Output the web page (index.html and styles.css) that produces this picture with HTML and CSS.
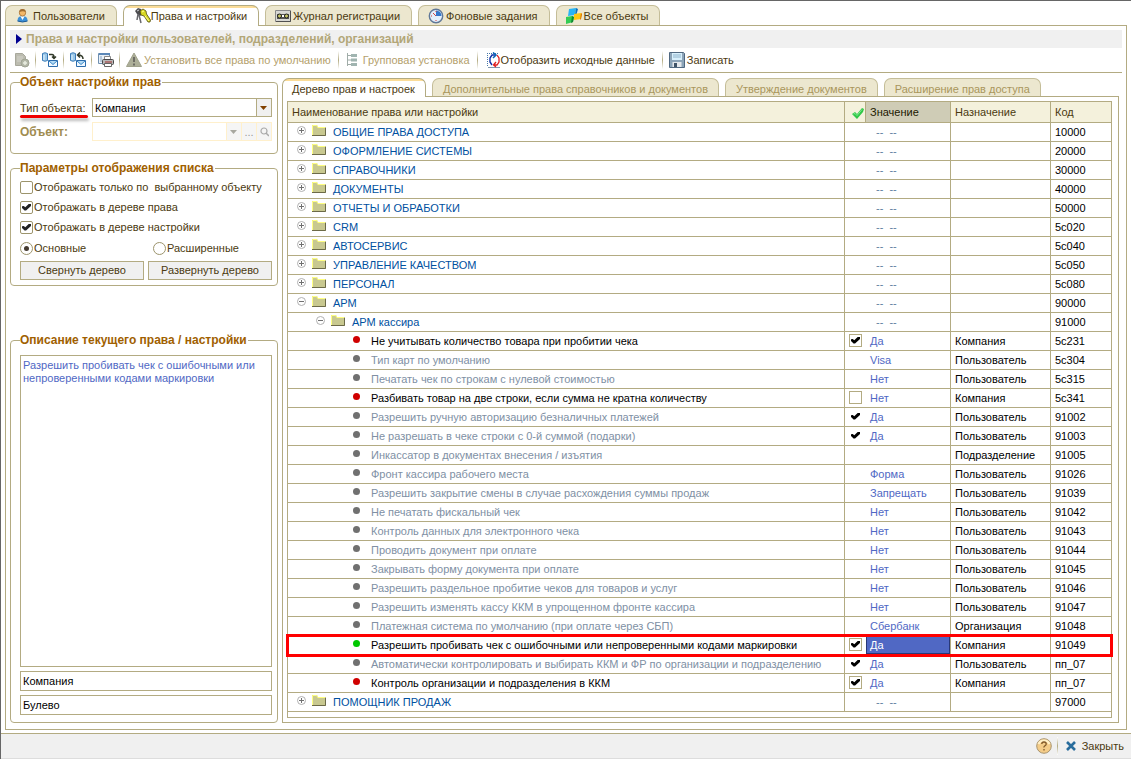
FILE: index.html
```html
<!DOCTYPE html>
<html lang="ru">
<head>
<meta charset="utf-8">
<title>Права и настройки</title>
<link rel="stylesheet" href="styles.css">
</head>
<body>
<svg class="defs" width="0" height="0">
  <symbol id="folder" viewBox="0 0 14 11"><path d="M0 0h5l1 2h8v9H0z" fill="#c8c890"/><path d="M.5 10V.5h4.3l1 2H13" fill="none" stroke="#ffff80"/><path d="M0 10.500h13.500V3" fill="none" stroke="#6c6a48"/></symbol>
  <symbol id="plus" viewBox="0 0 9 9"><circle cx="4.500" cy="4.500" r="4" fill="#fff" stroke="#b0b0b0"/><path d="M2 4.500h5M4.500 2v5" stroke="#707070"/></symbol>
  <symbol id="minus" viewBox="0 0 9 9"><circle cx="4.500" cy="4.500" r="4" fill="#fff" stroke="#b0b0b0"/><path d="M2 4.500h5" stroke="#707070"/></symbol>
  <symbol id="swap" viewBox="0 0 16 16"><path d="M.5 1.500v7q2.500 1.500 5 0v-7q-2.500-1.500-5 0z" fill="#9cc8e8" stroke="#3c7cb8"/><path d="M2 3v5" stroke="#e8f6ff"/><path d="M6.500 8.500h9v6h-9z" fill="#f0f8ff" stroke="#2c6cac"/><path d="M7 9l4 3.500L15 9" fill="#b4daf4" stroke="#3c88c8"/></symbol>
</svg>
<nav class="tabs top-tabs" role="tablist">
  <button class="tab" role="tab" type="button"><svg width="16" height="16" viewBox="0 0 16 16"><path d="M2.500 13q0-4.500 3-4.500h4q3 0 3 4.500-5 2-10 0z" fill="#3c90d8"/><path d="M5.500 8.500l2 3.500 2-3.500z" fill="#fff"/><path d="M2.500 13q5 2 10 0" fill="none" stroke="#1c5890"/><circle cx="7.500" cy="4.800" r="3.200" fill="#f4b868" stroke="#9c6428" stroke-width=".7"/><path d="M4.300 4q0-3 3.200-3t3.200 3Q8 2.500 4.300 4z" fill="#a06c30"/></svg><span>Пользователи</span></button>
  <button class="tab active" role="tab" aria-selected="true" type="button"><svg width="16" height="16" viewBox="0 0 16 16"><path d="M0 3l3-3 3 1 2 5-3 2-3-2z" fill="#4c4c50"/><path d="M4 7l2 8M3 6l-1 6" stroke="#68686c" stroke-width="1.500"/><path d="M2 3l2-1" stroke="#d0d0d0"/><path d="M5 3l3-2 3 2 .5 3 4 6-.5 2h-2L9 8 6 7z" fill="#d8d820" stroke="#504c10" stroke-width=".8"/><path d="M7 4l2-1M10 8l4 5" stroke="#ffff90"/></svg><span>Права и настройки</span></button>
  <button class="tab" role="tab" type="button"><svg width="16" height="16" viewBox="0 0 16 16"><path d="M.5 2.500h15v11H.5z" fill="#d8d8d4" stroke="#888"/><path d="M1 13.500h14.500V3" fill="none" stroke="#505050"/><path d="M2 6h12v5H2z" fill="#555"/><circle cx="4.500" cy="8" r="2" fill="#c8c868" stroke="#222"/><circle cx="11.500" cy="8" r="2" fill="#c8c868" stroke="#222"/><path d="M7 8h2" stroke="#fff" stroke-width="2"/></svg><span>Журнал регистрации</span></button>
  <button class="tab" role="tab" type="button"><svg width="16" height="16" viewBox="0 0 16 16"><circle cx="8" cy="8" r="6.700" fill="#e4f0fc" stroke="#607898" stroke-width="1.400"/><path d="M8 8V2.500A5.500 5.500 0 0 1 13.500 8z" fill="#3478cc"/><path d="M8 8l-3-3M8 3v1M3 8h1M8 12v1" stroke="#d04040"/></svg><span>Фоновые задания</span></button>
  <button class="tab" role="tab" type="button"><svg width="16" height="16" viewBox="0 0 16 16"><path d="M3 1l7-1-1 7-7 1z" fill="#28b4f4"/><path d="M10 0l2 1-2 7-1-1z" fill="#0870c0"/><path d="M8 6l7-1 1 1-1 5-7 1z" fill="#ffc810"/><path d="M15 5l1 1-1 5-1 1z" fill="#d87008"/><path d="M0 9l6-1 2 1-1 5-7 2z" fill="#34cc54"/><path d="M6 8l2 1-1 5-2 1z" fill="#108830"/></svg><span>Все объекты</span></button>
</nav>
<main class="frame">
  <h1 class="title"><svg width="6" height="10" viewBox="0 0 6 10"><path d="M0 0l6 5-6 5z" fill="#000090"/></svg>Права и настройки пользователей, подразделений, организаций</h1>
  <div class="toolbar" role="toolbar">
    <button class="tool" type="button" disabled aria-label="Добавить"><svg width="16" height="16" viewBox="0 0 16 16"><path d="M1.500 1.500h7l3 3v9h-10z" fill="#bcbcb0" stroke="#a8a89c"/><path d="M3 5h6M3 7h6M3 9h4" stroke="#d4d4cc"/><circle cx="11" cy="11" r="4" fill="#b4b8a8" stroke="#a0a494"/><path d="M11 9v4M9 11h4" stroke="#e8ece0" stroke-width="1.500"/></svg></button>
    <i class="sep"></i>
    <button class="tool" type="button" aria-label="Выгрузить"><svg width="16" height="16"><use href="#swap"/><path d="M7 2.500h3q2 0 2 3M10 4.500l2 2 2-2" fill="none" stroke="#303828" stroke-width="1.500"/></svg></button>
    <i class="sep"></i>
    <button class="tool" type="button" aria-label="Загрузить"><svg width="16" height="16"><use href="#swap"/><path d="M13 7q0-4-5-4M10 .5L7.500 3 10 5.500" fill="none" stroke="#303828" stroke-width="1.500"/></svg></button>
    <i class="sep"></i>
    <button class="tool" type="button" aria-label="Печать"><svg width="16" height="16" viewBox="0 0 16 16"><path d="M.5 1.500h11v10H.5z" fill="#e8f0f8" stroke="#7090b0"/><path d="M1 2h11" stroke="#5c88b8" stroke-width="2"/><path d="M2 5h2M2 7h2M2 9h2" stroke="#88a4c0"/><path d="M6.500 4.500h6v4h-6z" fill="#fff" stroke="#888"/><rect x="4.500" y="7.500" width="11" height="5" rx="1" fill="#b8b8b8" stroke="#484848"/><path d="M6.500 11.500h7v3h-7z" fill="#fff" stroke="#666"/><path d="M7 10h7" stroke="#a03030"/></svg></button>
    <i class="sep"></i>
    <button class="tool text" type="button" disabled><svg width="16" height="16" viewBox="0 0 16 16"><path d="M8 1l7.500 13.500H.5z" fill="#acae98" stroke="#a0a28c" stroke-linejoin="round"/><path d="M8 5v5M8 11.500v2" stroke="#6c6c64" stroke-width="2"/></svg><span>Установить все права по умолчанию</span></button>
    <i class="sep"></i>
    <button class="tool text" type="button" disabled><svg width="16" height="16" viewBox="0 0 16 16"><path d="M2.500 1v13M3 3.500h3M3 8h3M3 12.500h3" stroke="#a0aca8"/><path d="M6 2h6v3H6zM6 6.500h6v3H6zM6 11h6v3H6z" fill="#a0b4b0"/></svg><span>Групповая установка</span></button>
    <i class="sep"></i>
    <button class="tool text tight" type="button"><svg width="17" height="16" viewBox="-2 0 17 16"><path d="M1.500 1v14M3 1.500h9" stroke="#4878a8" stroke-dasharray="1 1"/><path d="M2 15.500h12" stroke="#8098b0"/><path d="M9 3H6L4 6v4l2 3" fill="none" stroke="#1030a8" stroke-width="1.400"/><path d="M7 .5L10 3 7 6" fill="none" stroke="#0868b8" stroke-width="1.500"/><path d="M11 3l2 3v4l-2 3H8M10 10l-2.500 3 2.500 2" fill="none" stroke="#e02020" stroke-width="1.300"/></svg><span>Отобразить исходные данные</span></button>
    <i class="sep"></i>
    <button class="tool text" type="button"><svg width="16" height="16" viewBox="0 0 16 16"><path d="M.5.5h14l1 1v14H.5z" fill="#8ca4b8" stroke="#506880"/><path d="M3 1h10v7H3z" fill="#d8f0fc"/><path d="M4 3h8M4 5h8" stroke="#90b4cc"/><path d="M3.500 10h9v5h-9z" fill="#e4e8ec"/><path d="M5 11h3v4H5z" fill="#405468"/></svg><span>Записать</span></button>
  </div>
  <div class="content">
    <aside class="side">
      <fieldset class="group">
        <legend>Объект настройки прав</legend>
        <div class="field"><label class="under" for="type">Тип объекта:</label><select id="type" class="combo"><option>Компания</option></select></div>
        <div class="field off"><label for="obj">Объект:</label><div class="picker"><input id="obj" type="text" disabled><button type="button" disabled aria-label="Список"><svg width="8" height="4" viewBox="0 0 8 4"><path d="M0 0h7L3.500 4z" fill="#a8a8a0"/></svg></button><button type="button" disabled>...</button><button type="button" disabled aria-label="Открыть"><svg width="9" height="10" viewBox="0 0 9 10"><circle cx="4" cy="4" r="3" fill="none" stroke="#aaa" stroke-width="1.200"/><path d="M6 6l3 3" stroke="#aaa" stroke-width="1.500"/></svg></button></div></div>
      </fieldset>
      <fieldset class="group options">
        <legend>Параметры отображения списка</legend>
        <label><input type="checkbox" class="box">Отображать только по&nbsp; выбранному объекту</label>
        <label><input type="checkbox" class="box" checked>Отображать в дереве права</label>
        <label><input type="checkbox" class="box" checked>Отображать в дереве настройки</label>
        <div class="pair"><label><input type="radio" name="mode" class="radio" checked>Основные</label><label><input type="radio" name="mode" class="radio">Расширенные</label></div>
        <div class="pair buttons"><button type="button">Свернуть дерево</button><button type="button">Развернуть дерево</button></div>
      </fieldset>
      <fieldset class="group about">
        <legend>Описание текущего права / настройки</legend>
        <div class="about-body">
          <textarea aria-label="Описание" readonly>Разрешить пробивать чек с ошибочными или непроверенными кодами маркировки</textarea>
          <input type="text" aria-label="Назначение" value="Компания" readonly>
          <input type="text" aria-label="Тип значения" value="Булево" readonly>
        </div>
      </fieldset>
    </aside>
    <section class="work">
      <nav class="tabs" role="tablist">
        <button class="tab active" role="tab" aria-selected="true" type="button">Дерево прав и настроек</button>
        <button class="tab dim" role="tab" type="button">Дополнительные права справочников и документов</button>
        <button class="tab dim" role="tab" type="button">Утверждение документов</button>
        <button class="tab dim" role="tab" type="button">Расширение прав доступа</button>
      </nav>
      <div class="panel"><div class="grid-box">
        <table class="grid">
          <colgroup><col><col class="c-check"><col class="c-value"><col class="c-scope"><col class="c-code"></colgroup>
          <thead><tr><th>Наименование права или настройки</th><th class="mark"><svg width="12" height="12" viewBox="0 0 12 12"><path d="M0 7l3-2 2 2 5-6 2 1-1 3-6 7z" fill="#30c848"/><path d="M1.500 7l1.500-.5 2 2 5-6" fill="none" stroke="#80e890"/></svg></th><th class="current">Значение</th><th>Назначение</th><th>Код</th></tr></thead>
          <tbody>
          <tr class="dir"><td><div class="node"><svg class="exp"><use href="#plus"/></svg><svg class="fold"><use href="#folder"/></svg>ОБЩИЕ ПРАВА ДОСТУПА</div></td><td></td><td>-- &nbsp;--</td><td></td><td>10000</td></tr>
          <tr class="dir"><td><div class="node"><svg class="exp"><use href="#plus"/></svg><svg class="fold"><use href="#folder"/></svg>ОФОРМЛЕНИЕ СИСТЕМЫ</div></td><td></td><td>-- &nbsp;--</td><td></td><td>20000</td></tr>
          <tr class="dir"><td><div class="node"><svg class="exp"><use href="#plus"/></svg><svg class="fold"><use href="#folder"/></svg>СПРАВОЧНИКИ</div></td><td></td><td>-- &nbsp;--</td><td></td><td>30000</td></tr>
          <tr class="dir"><td><div class="node"><svg class="exp"><use href="#plus"/></svg><svg class="fold"><use href="#folder"/></svg>ДОКУМЕНТЫ</div></td><td></td><td>-- &nbsp;--</td><td></td><td>40000</td></tr>
          <tr class="dir"><td><div class="node"><svg class="exp"><use href="#plus"/></svg><svg class="fold"><use href="#folder"/></svg>ОТЧЕТЫ И ОБРАБОТКИ</div></td><td></td><td>-- &nbsp;--</td><td></td><td>50000</td></tr>
          <tr class="dir"><td><div class="node"><svg class="exp"><use href="#plus"/></svg><svg class="fold"><use href="#folder"/></svg>CRM</div></td><td></td><td>-- &nbsp;--</td><td></td><td>5с020</td></tr>
          <tr class="dir"><td><div class="node"><svg class="exp"><use href="#plus"/></svg><svg class="fold"><use href="#folder"/></svg>АВТОСЕРВИС</div></td><td></td><td>-- &nbsp;--</td><td></td><td>5с040</td></tr>
          <tr class="dir"><td><div class="node"><svg class="exp"><use href="#plus"/></svg><svg class="fold"><use href="#folder"/></svg>УПРАВЛЕНИЕ КАЧЕСТВОМ</div></td><td></td><td>-- &nbsp;--</td><td></td><td>5с050</td></tr>
          <tr class="dir"><td><div class="node"><svg class="exp"><use href="#plus"/></svg><svg class="fold"><use href="#folder"/></svg>ПЕРСОНАЛ</div></td><td></td><td>-- &nbsp;--</td><td></td><td>5с080</td></tr>
          <tr class="dir"><td><div class="node"><svg class="exp"><use href="#minus"/></svg><svg class="fold"><use href="#folder"/></svg>АРМ</div></td><td></td><td>-- &nbsp;--</td><td></td><td>90000</td></tr>
          <tr class="dir"><td><div class="node sub"><svg class="exp"><use href="#minus"/></svg><svg class="fold"><use href="#folder"/></svg>АРМ кассира</div></td><td></td><td>-- &nbsp;--</td><td></td><td>91000</td></tr>
          <tr class="own"><td><div class="node leaf"><i class="dot"></i>Не учитывать количество товара при пробитии чека</div></td><td><input type="checkbox" class="box" aria-label="5с231" checked></td><td>Да</td><td>Компания</td><td>5с231</td></tr>
          <tr><td><div class="node leaf"><i class="dot"></i>Тип карт по умолчанию</div></td><td></td><td>Visa</td><td>Пользователь</td><td>5с304</td></tr>
          <tr><td><div class="node leaf"><i class="dot"></i>Печатать чек по строкам с нулевой стоимостью</div></td><td></td><td>Нет</td><td>Пользователь</td><td>5с315</td></tr>
          <tr class="own"><td><div class="node leaf"><i class="dot"></i>Разбивать товар на две строки, если сумма не кратна количеству</div></td><td><input type="checkbox" class="box" aria-label="5с341"></td><td>Нет</td><td>Компания</td><td>5с341</td></tr>
          <tr><td><div class="node leaf"><i class="dot"></i>Разрешить ручную авторизацию безналичных платежей</div></td><td><input type="checkbox" class="box bare" aria-label="91002" checked></td><td>Да</td><td>Пользователь</td><td>91002</td></tr>
          <tr><td><div class="node leaf"><i class="dot"></i>Не разрешать в чеке строки с 0-й суммой (подарки)</div></td><td><input type="checkbox" class="box bare" aria-label="91003" checked></td><td>Да</td><td>Пользователь</td><td>91003</td></tr>
          <tr><td><div class="node leaf"><i class="dot"></i>Инкассатор в документах внесения / изъятия</div></td><td></td><td></td><td>Подразделение</td><td>91005</td></tr>
          <tr><td><div class="node leaf"><i class="dot"></i>Фронт кассира рабочего места</div></td><td></td><td>Форма</td><td>Пользователь</td><td>91026</td></tr>
          <tr><td><div class="node leaf"><i class="dot"></i>Разрешить закрытие смены в случае расхождения суммы продаж</div></td><td></td><td>Запрещать</td><td>Пользователь</td><td>91039</td></tr>
          <tr><td><div class="node leaf"><i class="dot"></i>Не печатать фискальный чек</div></td><td></td><td>Нет</td><td>Пользователь</td><td>91042</td></tr>
          <tr><td><div class="node leaf"><i class="dot"></i>Контроль данных для электронного чека</div></td><td></td><td>Нет</td><td>Пользователь</td><td>91043</td></tr>
          <tr><td><div class="node leaf"><i class="dot"></i>Проводить документ при оплате</div></td><td></td><td>Нет</td><td>Пользователь</td><td>91044</td></tr>
          <tr><td><div class="node leaf"><i class="dot"></i>Закрывать форму документа при оплате</div></td><td></td><td>Нет</td><td>Пользователь</td><td>91045</td></tr>
          <tr><td><div class="node leaf"><i class="dot"></i>Разрешить раздельное пробитие чеков для товаров и услуг</div></td><td></td><td>Нет</td><td>Пользователь</td><td>91046</td></tr>
          <tr><td><div class="node leaf"><i class="dot"></i>Разрешить изменять кассу ККМ в упрощенном фронте кассира</div></td><td></td><td>Нет</td><td>Пользователь</td><td>91047</td></tr>
          <tr><td><div class="node leaf"><i class="dot"></i>Платежная система по умолчанию (при оплате через СБП)</div></td><td></td><td>Сбербанк</td><td>Организация</td><td>91048</td></tr>
          <tr class="own selected"><td><div class="node leaf"><i class="dot"></i>Разрешить пробивать чек с ошибочными или непроверенными кодами маркировки</div></td><td><input type="checkbox" class="box" aria-label="91049" checked></td><td>Да</td><td>Компания</td><td>91049</td></tr>
          <tr><td><div class="node leaf"><i class="dot"></i>Автоматически контролировать и выбирать ККМ и ФР по организации и подразделению</div></td><td><input type="checkbox" class="box bare" aria-label="пп_07" checked></td><td>Да</td><td>Пользователь</td><td>пп_07</td></tr>
          <tr class="own"><td><div class="node leaf"><i class="dot"></i>Контроль организации и подразделения в ККМ</div></td><td><input type="checkbox" class="box" aria-label="пп_07" checked></td><td>Да</td><td>Компания</td><td>пп_07</td></tr>
          <tr class="dir"><td><div class="node"><svg class="exp"><use href="#plus"/></svg><svg class="fold"><use href="#folder"/></svg>ПОМОЩНИК ПРОДАЖ</div></td><td></td><td>-- &nbsp;--</td><td></td><td>97000</td></tr>
          </tbody>
        </table>
      </div></div>
    </section>
  </div>
</main>
<footer class="footer">
  <button class="tool" type="button" aria-label="Справка"><svg width="16" height="16" viewBox="0 0 16 16"><circle cx="8" cy="8" r="7.300" fill="#f4cc88" stroke="#a89470"/><path d="M2.500 6a6 6 0 0 1 11 0" fill="none" stroke="#fff0c8" stroke-width="2"/><path d="M5.800 6q0-2 2.200-2t2.200 2q0 1-1.200 1.800T8 9.500M8 11v1.500" fill="none" stroke="#805828" stroke-width="1.300"/></svg></button>
  <i class="sep"></i>
  <button class="tool close" type="button"><svg width="10" height="10" viewBox="0 0 10 10"><path d="M1 1l8 8M9 1L1 9" stroke="#286c9c" stroke-width="2.600"/></svg><span>Закрыть</span></button>
</footer>
</body>
</html>
```
FILE: styles.css
```css
* { box-sizing: border-box; }
html, body { height: 100%; }
body {
  margin: 0;
  display: flex;
  flex-direction: column;
  min-height: 759px;
  border-left: 1px solid #666;
  border-top: 1px solid #666;
  background: #fff;
  color: #4b3a10;
  font: 11px/14px "Liberation Sans", Arial, sans-serif;
}
button, input, select, textarea { font: inherit; color: inherit; border-radius: 0; margin: 0; }
button { background: none; border: 0; padding: 0; white-space: nowrap; }
svg { display: block; flex: none; }
.defs { position: absolute; }

.tabs { display: flex; gap: 6px; }
.top-tabs { padding: 4px 4px 0; }
.tab {
  display: flex;
  align-items: center;
  gap: 2px;
  height: 20px;
  padding: 0 11px 0 9px;
  border: 1px solid #c4bd98;
  border-bottom: 0;
  border-radius: 7px 7px 0 0;
  background: #ece7cf;
}
.tab.active {
  position: relative;
  height: 21px;
  margin-bottom: -1px;
  padding-left: 11px;
  gap: 0;
  border-color: #b3ab82;
  background: linear-gradient(#fbdc98 2px, #fff 2px);
}
.tab.dim { color: #a9965c; }

.frame {
  flex: 1;
  display: flex;
  flex-direction: column;
  margin: 0 4px 3px;
  padding: 4px 4px 6px;
  border: 1px solid #b3ab82;
}
.title {
  display: flex;
  align-items: center;
  gap: 4px;
  height: 18px;
  margin: 0;
  padding-left: 6px;
  background: #f0f0f0;
  color: #b3a778;
  font-size: 12px;
}
.toolbar { display: flex; align-items: center; height: 25px; padding-left: 4px; border-bottom: 1px solid #b3ab82; }
.tool { display: flex; align-items: center; gap: 2px; }
.tool.text { padding-right: 2px; }
.tool.tight { gap: 0; }
.tool:disabled { color: #b3a06c; }
.sep { width: 1px; height: 18px; margin: 0 6px 0 5px; background: linear-gradient(#fff, #b3ab82, #fff); }

.content { flex: 1; display: flex; gap: 4px; }
.side { display: flex; flex-direction: column; width: 268px; padding-top: 2px; }
.group { min-width: 0; margin: 0 0 7px; padding: 9px 5px 12px 9px; border: 1px solid #b3ab82; border-radius: 4px; }
.group legend { padding: 0 1px 0 0; color: #a06000; font-size: 12px; font-weight: bold; }
.field { display: flex; align-items: center; height: 19px; }
.field + .field { margin-top: 5px; }
.field label { width: 72px; white-space: nowrap; }
.field.off label { color: #a08c50; font-size: 12px; font-weight: bold; }
.under { align-self: flex-end; height: 19px; padding-top: 3px; }
.under::after {
  content: "";
  display: block;
  width: 68px;
  height: 3px;
  border-radius: 2px;
  background: #f00000;
  box-shadow: 1px 3px 3px #bbb;
}
.combo {
  flex: 1;
  height: 19px;
  padding: 0 2px;
  appearance: none;
  border: 1px solid #b3ab82;
  background: url("data:image/svg+xml,%3Csvg xmlns='http://www.w3.org/2000/svg' width='15' height='17'%3E%3Cpath d='M0 0h15v17H0z' fill='%23f0f0f0'/%3E%3Cpath d='M.5 0v17' stroke='%23b3ab82'/%3E%3Cpath d='M4 7h7l-3.500 4z' fill='%23804000'/%3E%3C/svg%3E") no-repeat right center #fff;
  color: #000;
}
.picker { flex: 1; display: flex; min-width: 0; height: 19px; border: 1px solid #fff0cc; }
.picker input { flex: 1; min-width: 0; border: 0; background: #fff; }
.picker button { display: grid; place-items: center; width: 15px; background: #f5f5f5; color: #999; border-left: 1px solid #fff0cc; }
.options { margin-bottom: 47px; padding: 2px 5px 4px 9px; }
.options label { display: flex; align-items: center; height: 20px; gap: 1px; white-space: nowrap; }
.pair { display: grid; grid-template-columns: 133px 1fr; height: 22px; align-items: center; }
.buttons { grid-template-columns: 1fr 1fr; gap: 4px; }
.buttons button { height: 19px; border: 1px solid #b3ab82; background: #f0f0f0; }
.box, .radio {
  appearance: none;
  display: grid;
  place-items: center;
  flex: none;
  width: 13px;
  height: 13px;
  border: 1px solid #9c946c;
  background: #fff;
}
.box { border-radius: 2px; }
.radio { border-radius: 50%; }
.radio:checked::before { content: ""; width: 5px; height: 5px; border-radius: 50%; background: #443a30; }
.box:checked::before {
  content: "";
  width: 9px;
  height: 7px;
  background: #222;
  clip-path: polygon(0 40%, 20% 35%, 36% 55%, 80% 0, 100% 0, 100% 35%, 45% 100%, 28% 100%, 0 65%);
}
.about { flex: 1; margin: 0; padding: 8px 5px 7px 9px; }
.about-body { display: flex; flex-direction: column; gap: 4px; height: 100%; }
.about-body textarea { flex: 1; padding: 3px 2px; resize: none; border: 1px solid #b3ab82; color: #5068c4; line-height: 13px; outline: 0; }
.about-body input { height: 20px; padding: 0 2px; border: 1px solid #b3ab82; background: #fff; color: #000; }

.work { flex: 1; display: flex; flex-direction: column; min-width: 0; padding: 5px 3px 0 0; }
.work .tab { height: 18px; padding: 2px 10px 0; }
.work .tab.active { height: 19px; padding: 1px 10px 0 9px; }
.panel { flex: 1; display: flex; padding: 4px 6px 4px 4px; border: 1px solid #b3ab82; }
.grid-box { flex: 1; border: 1px solid #b3ab82; }
.grid { width: 100%; table-layout: fixed; border-spacing: 0; color: #000; }
.c-check { width: 21px; }
.c-value { width: 85px; }
.c-scope { width: 100px; }
.c-code { width: 60px; }
.grid th, .grid td {
  height: 19px;
  padding: 1px 4px 0;
  border: 0 solid #b3ab82;
  border-width: 0 1px 1px 0;
  text-align: left;
  white-space: nowrap;
  line-height: 17px;
}
.grid th { height: 21px; background: #f4f1dc; color: #4b3a10; font-weight: normal; }
.grid th.current { background: #cfccb6; color: #201800; }
.grid th.mark { padding-left: 7px; }
.grid th:last-child, .grid td:last-child { border-right: 0; }
.grid td:nth-child(2) { padding: 0 4px 2px; border-right: 0; }
.grid td:nth-child(1) { padding: 0 0 0 9px; }
.grid td:nth-child(3) { color: #5068c4; }
.grid td .box { height: 13px; border-color: #b3ab82; border-radius: 0; }
.grid td .bare { border-color: transparent; }
.grid td .box::before { background: #000; }
.node { display: flex; align-items: center; height: 18px; padding-top: 1px; color: #8090a4; }
.sub { margin-left: 19px; }
.leaf { margin-left: 56px; }
.exp { width: 9px; height: 9px; margin: 0 6px 4px 0; }
.fold { width: 14px; height: 11px; margin: 0 7px 4px 0; }
.dot { width: 7px; height: 7px; margin: 0 11px 4px 0; border-radius: 50%; background: #707070; }
.dir .node { color: #0050a0; }
.dir td:nth-child(3) { padding-left: 10px; color: #6080a0; }
.own .node { color: #000; }
.own .dot { background: #d00000; }
.selected { position: relative; outline: 3px solid #f00; outline-offset: -1px; }
.selected .dot { background: #00c800; }
.selected td:nth-child(3) { background: #5068c4; color: #fff; box-shadow: inset 0 0 0 1px #283878; }

.footer {
  display: flex;
  align-items: center;
  justify-content: flex-end;
  height: 26px;
  padding-right: 7px;
  border-top: 1px solid #b3ab82;
  border-bottom: 1px solid #ddd;
  background: #f0f0f0;
}
.close { gap: 6px; padding-left: 2px; }
```
